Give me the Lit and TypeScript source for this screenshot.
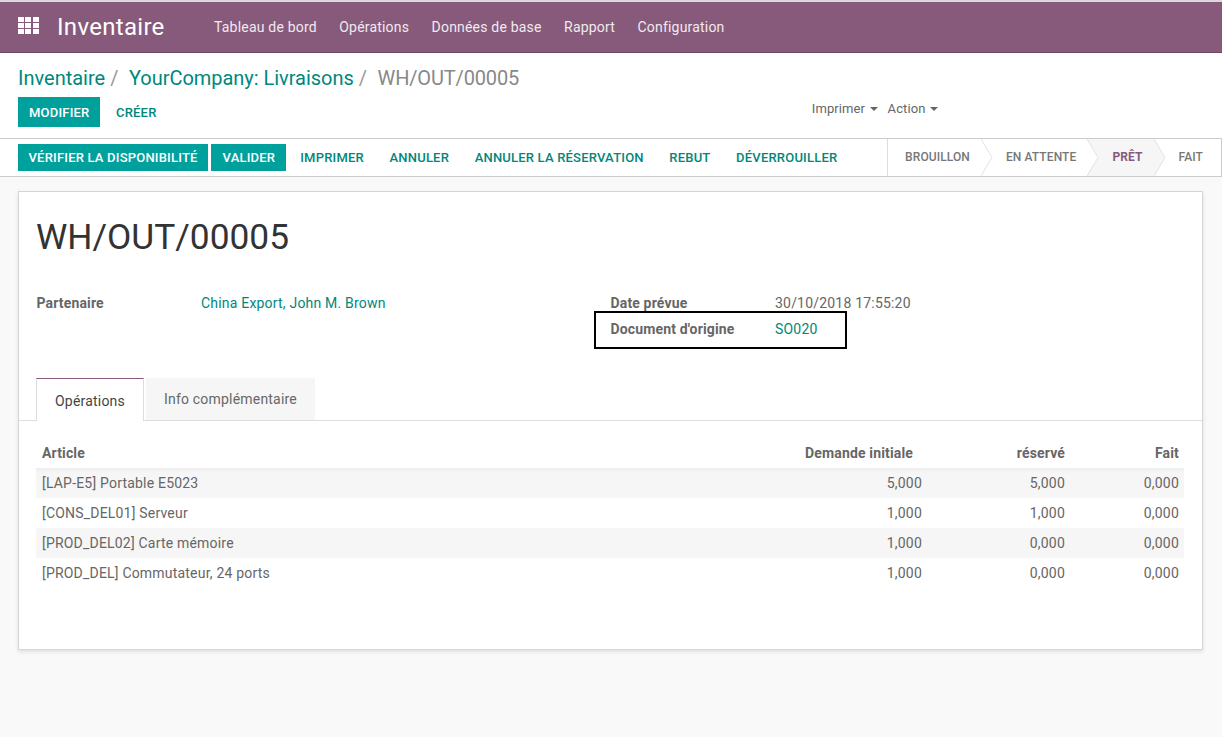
import { LitElement, html, css } from "lit";
import { customElement } from "lit/decorators.js";

const MENU = ["Tableau de bord", "Opérations", "Données de base", "Rapport", "Configuration"];
const ACTIONS = ["IMPRIMER", "ANNULER", "ANNULER LA RÉSERVATION", "REBUT", "DÉVERROUILLER"];
const STAGES = ["BROUILLON", "EN ATTENTE", "PRÊT", "FAIT"];
const LINES = [
    ["[LAP-E5] Portable E5023", "5,000", "5,000", "0,000"],
    ["[CONS_DEL01] Serveur", "1,000", "1,000", "0,000"],
    ["[PROD_DEL02] Carte mémoire", "1,000", "0,000", "0,000"],
    ["[PROD_DEL] Commutateur, 24 ports", "1,000", "0,000", "0,000"],
];

@customElement("app-root")
export class AppRoot extends LitElement {
    static styles = css`
        :host {
            display: block;
            height: 737px;
            overflow: hidden;
            background: #f9f9f9;
            font-family: Roboto, "Noto Sans", sans-serif;
            font-size: 14px;
            letter-spacing: 0.2px;
            color: #666;
        }
        a {
            color: #00877c;
            text-decoration: none;
        }
        .top-strip {
            height: 2px;
            background: #d9d9d9;
        }
        .navbar {
            display: flex;
            align-items: center;
            height: 50px;
            background: #875a7b;
            border-bottom: 1px solid #6f4a65;
            color: #fff;
        }
        .apps {
            display: grid;
            grid-template-columns: repeat(3, 6px);
            grid-auto-rows: 4.5px;
            gap: 1.5px;
            margin: 0 0 3px 17.5px;
        }
        .apps i {
            background: #fff;
        }
        .brand {
            margin-left: 18.5px;
            width: 157px;
            font-size: 24px;
            letter-spacing: 0.3px;
        }
        .menu {
            display: flex;
            gap: 22.4px;
            color: #f0eaee;
        }
        .panel {
            height: 86px;
            background: #fff;
            padding: 0 18px;
            box-sizing: border-box;
            border-bottom: 1px solid #ccc;
        }
        .crumbs {
            display: flex;
            height: 44px;
            align-items: center;
            padding-top: 6px;
            box-sizing: border-box;
            font-size: 20px;
            letter-spacing: 0;
            color: #777;
        }
        .crumbs span {
            margin: 0 10.5px 0 5px;
            color: #999;
        }
        .crumbs a + span + a {
            letter-spacing: -0.03px;
        }
        .crumbs b {
            font-weight: 400;
            letter-spacing: -0.15px;
            color: #888;
        }
        .buttons {
            display: flex;
            align-items: center;
            height: 30px;
        }
        .primary {
            display: flex;
            align-items: center;
            background: #00a09d;
            color: #fff;
            font-size: 13px;
            font-weight: 500;
            padding: 0 10.5px 0 11px;
        }
        .buttons .primary {
            height: 30px;
        }
        .create {
            margin-left: 16px;
            font-size: 13px;
            font-weight: 500;
            color: #00877c;
        }
        .sidebar {
            display: flex;
            gap: 10px;
            margin: 0 0 0 auto;
            padding-right: 266px;
            font-size: 13px;
            letter-spacing: 0.1px;
            color: #666;
            transform: translateY(-4px);
        }
        .caret {
            display: inline-block;
            margin-left: 4.5px;
            vertical-align: middle;
            border-top: 4px solid #666;
            border-left: 4px solid transparent;
            border-right: 4px solid transparent;
        }
        .statusbar {
            display: flex;
            justify-content: space-between;
            height: 38px;
            box-sizing: border-box;
            background: #fff;
            border-bottom: 1px solid #ccc;
            border-right: 1px solid #ccc;
        }
        .actions {
            display: flex;
            align-items: center;
            padding-left: 18px;
            font-size: 13px;
            font-weight: 500;
        }
        .actions .primary {
            height: 27px;
            margin-right: 3px;
            padding: 0 10.5px;
        }
        .actions .primary + .primary {
            padding: 0 11px 0 11.5px;
        }
        .actions a {
            margin-left: 11px;
            margin-right: 14.6px;
            color: #00877c;
        }
        .stages {
            display: flex;
            border-left: 1px solid #ddd;
            font-size: 12px;
            font-weight: 500;
            letter-spacing: 0.1px;
            color: #777;
        }
        .stage {
            position: relative;
            display: flex;
            align-items: center;
            padding: 0 11px 1px 25px;
        }
        .stage:first-child {
            padding-left: 17px;
        }
        .stage:last-child {
            padding-right: 18px;
        }
        .stage.active {
            background: #f6f6f6;
            color: #875a7b;
            font-weight: 700;
        }
        .stage svg {
            position: absolute;
            top: 0;
            right: -12px;
            width: 12px;
            height: 37px;
            z-index: 1;
        }
        .content {
            padding: 14px 19px 0 18px;
        }
        .sheet {
            height: 459px;
            box-sizing: border-box;
            background: #fff;
            border: 1px solid #d5d5d5;
            box-shadow: 0 2px 4px rgba(0, 0, 0, 0.1);
            padding-top: 24px;
        }
        h1 {
            margin: 0 0 0 17px;
            font-size: 35.3px;
            font-weight: 400;
            letter-spacing: 0;
            line-height: 42px;
            color: #333;
        }
        .fields {
            display: grid;
            grid-template-columns: 574px 1fr;
            height: 88px;
            margin: 32px 0 0 17px;
            line-height: 26px;
        }
        .field {
            display: flex;
            height: 26px;
        }
        .field label {
            width: 164.5px;
            padding-left: 0.5px;
            font-weight: 700;
            letter-spacing: 0.15px;
        }
        .tabs {
            display: flex;
            height: 43px;
            box-sizing: border-box;
            padding-left: 17px;
            border-bottom: 1px solid #ddd;
        }
        .tab {
            display: flex;
            align-items: center;
            padding: 0 18px;
            height: 42px;
            background: #f6f6f6;
        }
        .tab.active {
            height: 43px;
            margin-right: 2px;
            padding: 1px 18px 0;
            box-sizing: border-box;
            background: #fff;
            border: 1px solid #ddd;
            border-top: 1px solid #875a7b;
            border-bottom: 0;
            color: #444;
        }
        .table-wrap {
            margin: 16px 18px 0 17px;
        }
        table {
            width: 100%;
            border-collapse: collapse;
        }
        th {
            height: 31px;
            padding: 0 5px 0 6px;
            text-align: left;
            font-weight: 700;
            letter-spacing: 0.15px;
        }
        td {
            height: 30px;
            padding: 0 5px 0 6px;
        }
        tbody tr:nth-child(odd) {
            background: #f6f6f6;
        }
        tbody tr:first-child {
            background: linear-gradient(#ececec, #f6f6f6 5px);
        }
        .num {
            text-align: right;
        }
        th.num.first {
            padding-right: 14px;
        }
        .c1 {
            width: 220px;
        }
        .c2 {
            width: 132px;
        }
        th.c2,
        td.c2 {
            padding-right: 14px;
        }
        .c3 {
            width: 94px;
        }
        .highlight {
            position: absolute;
            left: 594px;
            top: 311px;
            width: 249px;
            height: 34px;
            border: 2px solid #000;
        }
    `;

    render() {
        return html`
            <div class="top-strip"></div>
            <nav class="navbar">
                <div class="apps">${Array.from({ length: 9 }, () => html`<i></i>`)}</div>
                <div class="brand">Inventaire</div>
                <div class="menu">${MENU.map((m) => html`<span>${m}</span>`)}</div>
            </nav>
            <div class="panel">
                <div class="crumbs">
                    <a>Inventaire</a><span>/</span> <a>YourCompany: Livraisons</a><span>/</span>
                    <b>WH/OUT/00005</b>
                </div>
                <div class="buttons">
                    <div class="primary">MODIFIER</div>
                    <div class="create">CRÉER</div>
                    <div class="sidebar">
                        <span>Imprimer<i class="caret"></i></span>
                        <span>Action<i class="caret"></i></span>
                    </div>
                </div>
            </div>
            <div class="statusbar">
                <div class="actions">
                    <div class="primary">VÉRIFIER LA DISPONIBILITÉ</div>
                    <div class="primary">VALIDER</div>
                    ${ACTIONS.map((a) => html`<a>${a}</a>`)}
                </div>
                <div class="stages">
                    ${STAGES.map(
                        (s, i) => html`
                            <div class="stage ${s === "PRÊT" ? "active" : ""}">
                                ${s}
                                ${i < STAGES.length - 1
                                    ? html`<svg viewBox="0 0 12 37">
                                          <path
                                              d="M0 0 L11 18.5 L0 37"
                                              fill="${s === "PRÊT" ? "#f6f6f6" : "#fff"}"
                                              stroke="#e2e2e2"
                                          />
                                      </svg>`
                                    : ""}
                            </div>
                        `,
                    )}
                </div>
            </div>
            <div class="content">
                <div class="sheet">
                    <h1>WH/OUT/00005</h1>
                    <div class="fields">
                        <div>
                            <div class="field">
                                <label>Partenaire</label><a>China Export, John M. Brown</a>
                            </div>
                        </div>
                        <div>
                            <div class="field">
                                <label>Date prévue</label><span>30/10/2018 17:55:20</span>
                            </div>
                            <div class="field">
                                <label>Document d'origine</label><a>SO020</a>
                            </div>
                        </div>
                    </div>
                    <div class="tabs">
                        <div class="tab active">Opérations</div>
                        <div class="tab">Info complémentaire</div>
                    </div>
                    <div class="table-wrap">
                        <table>
                            <thead>
                                <tr>
                                    <th>Article</th>
                                    <th class="num c1 first">Demande initiale</th>
                                    <th class="num c2">réservé</th>
                                    <th class="num c3">Fait</th>
                                </tr>
                            </thead>
                            <tbody>
                                ${LINES.map(
                                    (l) => html`
                                        <tr>
                                            <td>${l[0]}</td>
                                            <td class="num">${l[1]}</td>
                                            <td class="num c2">${l[2]}</td>
                                            <td class="num">${l[3]}</td>
                                        </tr>
                                    `,
                                )}
                            </tbody>
                        </table>
                    </div>
                </div>
            </div>
            <div class="highlight"></div>
        `;
    }
}
